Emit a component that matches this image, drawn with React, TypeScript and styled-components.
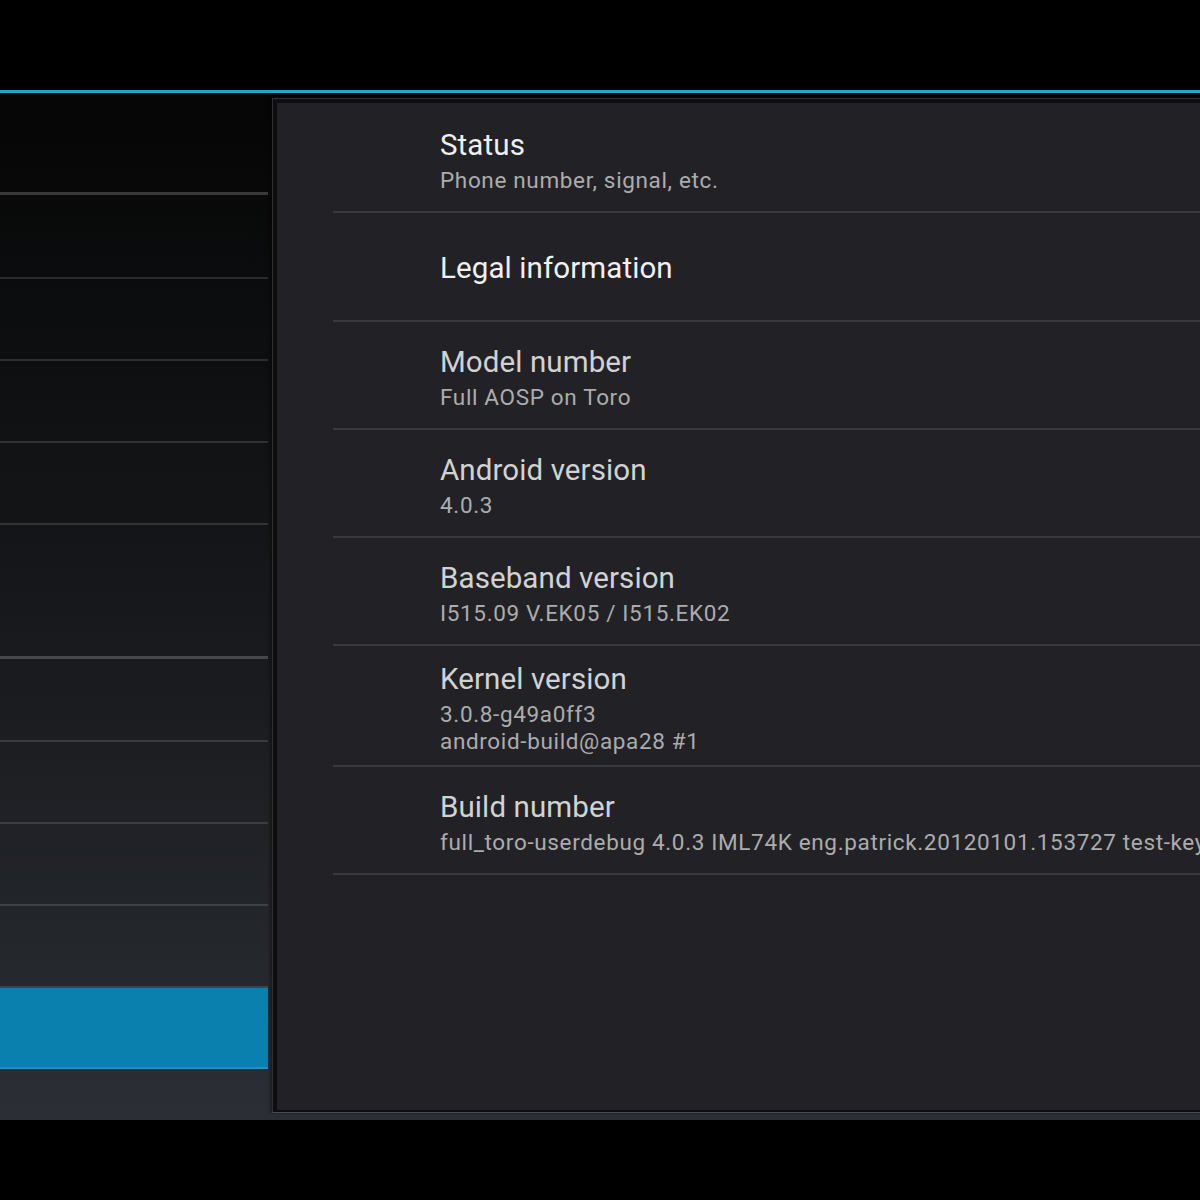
import React from "react";
import styled, { createGlobalStyle } from "styled-components";

const GlobalStyle = createGlobalStyle`
  html, body {
    margin: 0;
    padding: 0;
    background: #000;
    overflow: hidden;
    width: 1200px;
    height: 1200px;
  }
  * { box-sizing: border-box; }
  body {
    font-family: Roboto, "Noto Sans", "Liberation Sans", sans-serif;
    -webkit-font-smoothing: antialiased;
  }
`;

const Screen = styled.div`
  width: 1200px;
  height: 1200px;
  background: #000;
  display: flex;
  flex-direction: column;
`;

const ActionBar = styled.div`
  height: 90px;
  flex: none;
  background: #000;
`;

const AccentLine = styled.div`
  height: 3px;
  flex: none;
  background: #27a0d4;
`;

const Main = styled.div`
  height: 1027px;
  flex: none;
  display: flex;
  background: linear-gradient(to bottom, #050505 0%, #16181b 50%, #2b2e34 100%);
`;

const HeaderList = styled.div`
  width: 268px;
  flex: none;
  display: flex;
  flex-direction: column;
`;

const HeaderRow = styled.div<{ $h: number; $thick?: boolean; $selected?: boolean }>`
  height: ${(p) => p.$h + (p.$thick ? 3 : 2)}px;
  flex: none;
  background: ${(p) => (p.$selected ? "#0980ad" : "transparent")};
  border-bottom: ${(p) => (p.$thick ? "3px solid rgba(255,255,255,0.2)" : "2px solid rgba(255,255,255,0.13)")};
`;

const DetailFrame = styled.div`
  margin: 5px 0 7px 4px;
  width: 1100px;
  flex: none;
  border: 1px solid #313134;
  border-bottom-color: #4a4b4f;
  padding: 4px 0 2px 4px;
  background: #0e0e10;
  box-shadow: -2px 0 3px rgba(0, 0, 0, 0.35);
  display: flex;
`;

const DetailPane = styled.div`
  flex: 1;
  background: #222226;
  padding: 2px 0 0 56px;
  display: flex;
  flex-direction: column;
`;

const PrefRow = styled.div<{ $h: number; $single?: boolean }>`
  height: ${(p) => p.$h + 2}px;
  flex: none;
  display: flex;
  flex-direction: column;
  justify-content: center;
  padding: ${(p) => (p.$single ? "2px" : "6px")} 0 0 107px;
  border-bottom: 2px solid #3a3a3e;
  white-space: nowrap;
`;

const Title = styled.div<{ $bright?: boolean }>`
  font-size: 29.5px;
  line-height: 34px;
  letter-spacing: 0.1px;
  color: ${(p) => (p.$bright ? "#f0f0f0" : "#d2d2d2")};
`;

const Summary = styled.div`
  margin-top: 5px;
  font-size: 22.5px;
  line-height: 27px;
  letter-spacing: 0.65px;
  color: #acacac;
`;

type Pref = { title: string; lines?: string[]; bright?: boolean; h: number };

const prefs: Pref[] = [
  { title: "Status", lines: ["Phone number, signal, etc."], bright: true, h: 106 },
  { title: "Legal information", bright: true, h: 107 },
  { title: "Model number", lines: ["Full AOSP on Toro"], h: 106 },
  { title: "Android version", lines: ["4.0.3"], h: 106 },
  { title: "Baseband version", lines: ["I515.09 V.EK05 / I515.EK02"], h: 106 },
  { title: "Kernel version", lines: ["3.0.8-g49a0ff3", "android-build@apa28 #1"], h: 119 },
  {
    title: "Build number",
    lines: ["full_toro-userdebug 4.0.3 IML74K eng.patrick.20120101.153727 test-keys"],
    h: 106,
  },
];

const headers: { h: number; thick?: boolean; selected?: boolean }[] = [
  { h: 99, thick: true },
  { h: 82 },
  { h: 80 },
  { h: 80 },
  { h: 80 },
  { h: 131, thick: true },
  { h: 81 },
  { h: 80 },
  { h: 80 },
  { h: 80 },
  { h: 79, selected: true },
];

export default function App() {
  return (
    <Screen>
      <GlobalStyle />
      <ActionBar />
      <AccentLine />
      <Main>
        <HeaderList>
          {headers.map((r, i) => (
            <HeaderRow key={i} $h={r.h} $thick={r.thick} $selected={r.selected} />
          ))}
        </HeaderList>
        <DetailFrame>
          <DetailPane>
            {prefs.map((p) => (
              <PrefRow key={p.title} $h={p.h} $single={!p.lines}>
                <Title $bright={p.bright}>{p.title}</Title>
                {p.lines && (
                  <Summary>
                    {p.lines.map((l) => (
                      <div key={l}>{l}</div>
                    ))}
                  </Summary>
                )}
              </PrefRow>
            ))}
          </DetailPane>
        </DetailFrame>
      </Main>
    </Screen>
  );
}
